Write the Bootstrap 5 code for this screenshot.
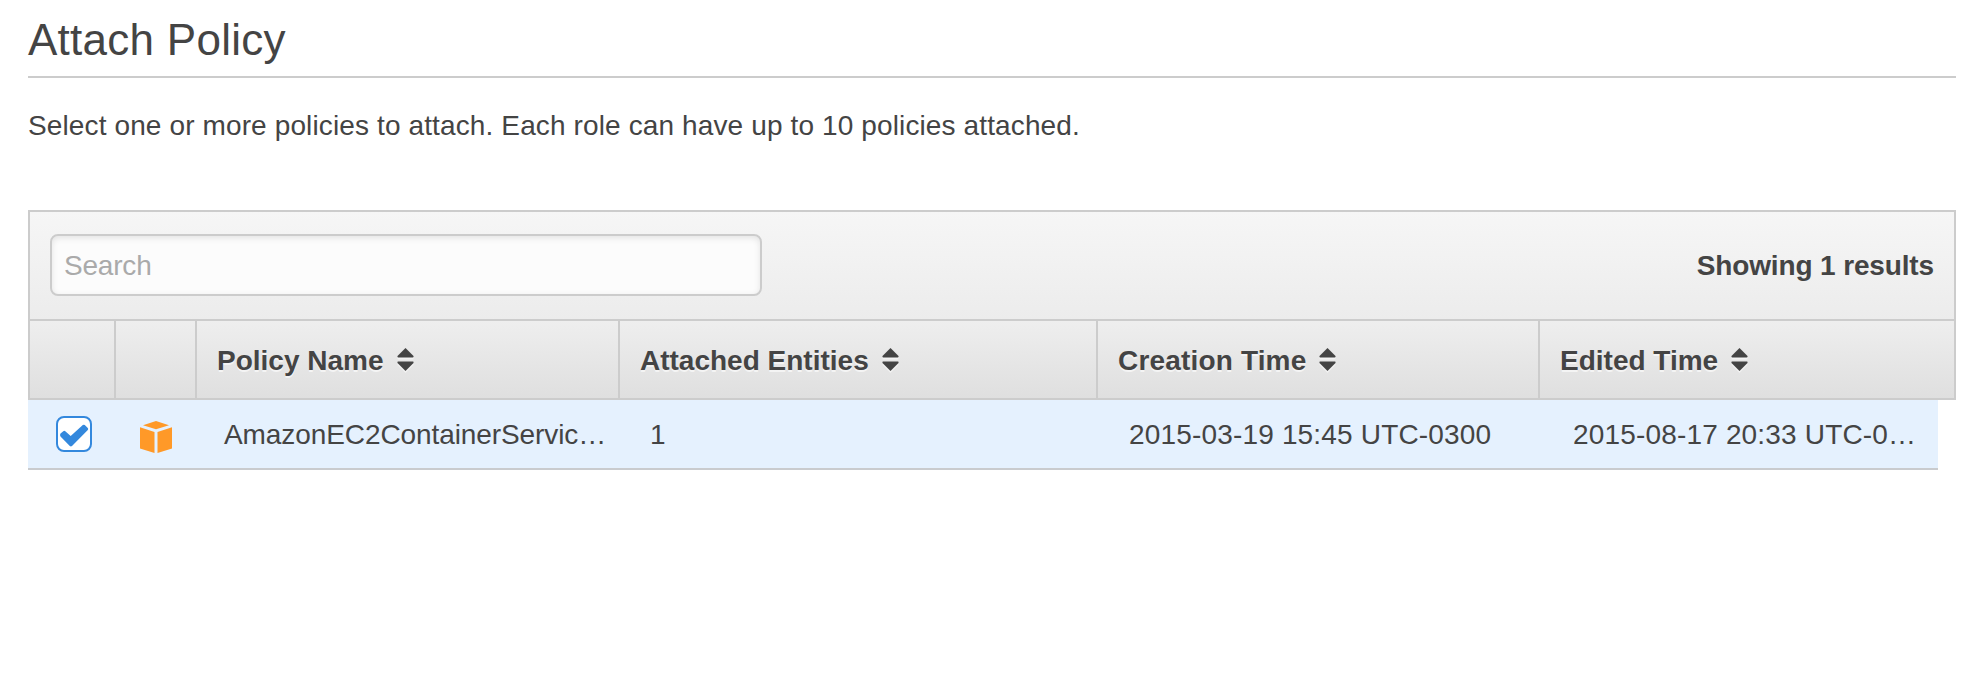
<!DOCTYPE html>
<html lang="en">
<head>
<meta charset="utf-8">
<meta name="viewport" content="width=device-width, initial-scale=1">
<title>Attach Policy</title>
<link href="https://cdn.jsdelivr.net/npm/bootstrap@5.3.0/dist/css/bootstrap.min.css" rel="stylesheet">
<style>
  body { font-family: "Liberation Sans", Arial, sans-serif; font-size: 28px; line-height: 40px; color: #444; background: #fff; }
  .page { padding: 15px 22px 0 28px; }
  .page-title { font-size: 44px; line-height: 50px; font-weight: 400; letter-spacing: .27px; padding-bottom: 11px; border-bottom: 2px solid #ccc; margin: 0 0 28px; }
  .intro { letter-spacing: .125px; margin: 0 0 64px; }
  .policy-panel { border: 2px solid #ccc; }
  .policy-toolbar { height: 107px; padding: 22px 20px 0; background: linear-gradient(#f6f6f6, #ececec); }
  .policy-search.form-control { width: 712px; height: 62px; padding: 2px 12px 0; font-size: 28px; line-height: 40px; letter-spacing: -.2px; color: #444; background: #fcfcfc; border: 2px solid #ccc; border-radius: 8px; box-shadow: inset 0 2px 6px rgba(0,0,0,.1); }
  .policy-search::placeholder { color: #aaa; opacity: 1; }
  .result-count { height: 62px; padding-top: 2px; letter-spacing: -.14px; }
  .policy-head { display: grid; grid-template-columns: 86px 81px 423px 478px 442px 1fr; height: 79px; border-top: 2px solid #ccc; background: linear-gradient(#eee, #dfdfdf); text-shadow: 0 2px 0 rgba(255,255,255,.6); }
  .policy-head > div { display: flex; align-items: center; padding: 3px 0 0 20px; border-right: 2px solid #ccc; white-space: nowrap; }
  .policy-head > div:last-child { border-right: 0; }
  .sort-icon { width: 17px; height: 23px; margin: 0 0 4px 13px; filter: drop-shadow(0 2px 0 rgba(255,255,255,.5)); }
  .policy-row { display: grid; grid-template-columns: 84px 112px 426px 479px 444px 1fr; width: 1910px; height: 70px; background: #e5f1fe; border-bottom: 2px solid #c9cbce; }
  .policy-row > div { padding-top: 15px; white-space: nowrap; }
  .policy-row > .check-cell { padding: 16px 0 0 28px; }
  .policy-row > .cube-cell { padding: 21px 0 0 28px; }
  .policy-row svg { display: block; }
  .policy-name { letter-spacing: -.09px; }
  .stamp { letter-spacing: .17px; }
</style>
</head>
<body>
<svg class="d-none">
  <symbol id="sort" viewBox="0 0 17 23"><path fill="#444" d="M8.500 0 16.500 8q.5 1.400-.8 1.400H1.300Q0 9.400 .5 8ZM1.300 13.600h14.400q1.300 0 .8 1.400l-8 8-8-8q-.5-1.400.8-1.400Z"/></symbol>
</svg>
<main class="page">
  <h1 class="page-title">Attach Policy</h1>
  <p class="intro">Select one or more policies to attach. Each role can have up to 10 policies attached.</p>

  <section>
    <div class="policy-panel">
      <div class="policy-toolbar d-flex justify-content-between align-items-start">
        <input class="form-control policy-search" type="text" placeholder="Search" aria-label="Search">
        <div class="result-count d-flex align-items-center fw-bold">Showing 1 results</div>
      </div>
      <div class="policy-head fw-bold">
        <div></div>
        <div></div>
        <div>Policy Name<svg class="sort-icon"><use href="#sort"/></svg></div>
        <div>Attached Entities<svg class="sort-icon"><use href="#sort"/></svg></div>
        <div><span class="stamp">Creation Time</span><svg class="sort-icon"><use href="#sort"/></svg></div>
        <div>Edited Time<svg class="sort-icon"><use href="#sort"/></svg></div>
      </div>
    </div>
    <div class="policy-row">
      <div class="check-cell">
        <svg width="36" height="36" viewBox="0 0 36 36"><rect x="1" y="1" width="34" height="34" rx="7" fill="#fff" stroke="#38d" stroke-width="2"/><path d="M4.500 17.400 7.300 15.200q1-.8 2 0l5.400 4.900L26.800 9.100q1-.8 2 0l3 2.800q.9 1 0 2.100L16 30q-1.100.9-2.200 0L4.500 20.400q-1-1.500 0-3Z" fill="#38d"/></svg>
      </div>
      <div class="cube-cell">
        <svg width="32" height="32" viewBox="0 0 32 32" fill="#ff9928"><path d="M3 4.300 16 0 29 4.300 16 8.300ZM0 6.200 14.500 11V32L0 27.500ZM32 6.200 17.500 11V32L32 27.500Z"/></svg>
      </div>
      <div class="policy-name">AmazonEC2ContainerServic…</div>
      <div>1</div>
      <div class="stamp">2015-03-19 15:45 UTC-0300</div>
      <div class="stamp">2015-08-17 20:33 UTC-0…</div>
    </div>
  </section>
</main>
<script src="https://cdn.jsdelivr.net/npm/bootstrap@5.3.0/dist/js/bootstrap.bundle.min.js"></script>
</body>
</html>
